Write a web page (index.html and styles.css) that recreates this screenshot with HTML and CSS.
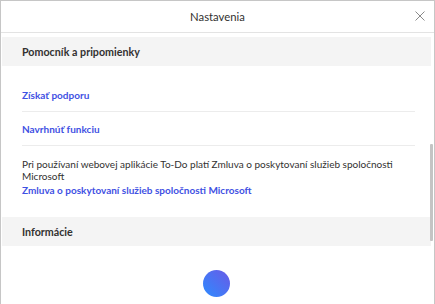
FILE: index.html
```html
<!DOCTYPE html>
<html lang="sk">
<head>
<meta charset="UTF-8">
<meta name="viewport" content="width=device-width, initial-scale=1.0">
<title>Nastavenia</title>
<link rel="stylesheet" href="styles.css">
</head>
<body>
<div class="dialog">
    <div class="dialog-header">
        <h1>Nastavenia</h1>
        <button class="close-btn" aria-label="Zavrieť">
            <svg width="10" height="10" viewBox="0 0 10 10">
                <path d="M0.5,0.5 L9.5,9.5 M9.5,0.5 L0.5,9.5" stroke="#8a8a8a" stroke-width="1" fill="none"/>
            </svg>
        </button>
    </div>

    <div class="dialog-body">
        <div class="section-title">Pomocník a pripomienky</div>

        <ul class="link-list">
            <li><a href="#">Získať podporu</a></li>
            <li><a href="#">Navrhnúť funkciu</a></li>
        </ul>

        <div class="terms">
            <p>Pri používaní webovej aplikácie To-Do platí Zmluva o poskytovaní služieb spoločnosti Microsoft</p>
            <a href="#">Zmluva o poskytovaní služieb spoločnosti Microsoft</a>
        </div>

        <div class="section-title">Informácie</div>

        <div class="about">
            <div class="app-logo"></div>
        </div>

        <!-- scrollbar thumb -->
        <div class="scroll-thumb"></div>
    </div>
</div>
</body>
</html>
```

FILE: styles.css
```css
body {
    margin: 0;
    padding: 0;
    background: #fff;
    font-family: Lato, "Noto Sans", sans-serif;
    color: #323130;
}
.dialog {
    width: 435px;
    height: 304px;
    box-sizing: border-box;
    border: 1px solid #c6c6c6;
    border-bottom: none;
    display: flex;
    flex-direction: column;
    overflow: hidden;
}
.dialog-header {
    position: relative;
    height: 31px;
    flex-shrink: 0;
    display: flex;
    align-items: center;
    justify-content: center;
    border-bottom: 1px solid #e3e3e3;
}
.dialog-header h1 {
    margin: 0;
    font-size: 11.3px;
    font-weight: 400;
    color: #323130;
}
.close-btn {
    position: absolute;
    right: 9px;
    top: 10px;
    width: 10px;
    height: 10px;
    padding: 0;
    border: none;
    background: none;
    display: flex;
}
.dialog-body {
    position: relative;
    flex: 1;
    padding: 4px 3px 0 1px;
    overflow: hidden;
}
.section-title {
    background: #f4f4f4;
    height: 29px;
    line-height: 29px;
    padding-left: 20px;
    font-size: 10.7px;
    font-weight: 700;
    color: #323130;
}
.link-list {
    list-style: none;
    margin: 12px 16px 0 20px;
    padding: 0;
}
.link-list li {
    height: 33px;
    display: flex;
    align-items: center;
    border-bottom: 1px solid #ececec;
}
a {
    color: #3f51e3;
    font-size: 10px;
    font-weight: 700;
    text-decoration: none;
}
.terms {
    margin: 12px 16px 0 20px;
    height: 59px;
    font-size: 10px;
    line-height: 12px;
}
.terms p {
    margin: 0 0 2px;
}
.about {
    height: 70px;
    display: flex;
    justify-content: center;
    padding-top: 24px;
    box-sizing: border-box;
}
.app-logo {
    width: 27px;
    height: 27px;
    border-radius: 50%;
    background: linear-gradient(45deg, #2d8bff, #6a5ae6);
}
.scroll-thumb {
    position: absolute;
    right: 1px;
    top: 111px;
    width: 3px;
    height: 97px;
    background: #c4c4c4;
    border-radius: 1px;
}
```
